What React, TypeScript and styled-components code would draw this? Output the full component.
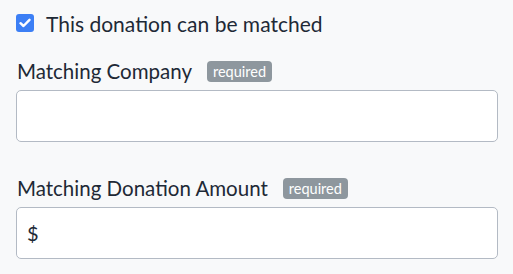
import React from 'react';
import styled, { createGlobalStyle } from 'styled-components';

const Global = createGlobalStyle`
  html, body {
    margin:0;
    padding:0;
    background:#f8f9fa;
  }
  body {
    font-family:Lato, "Open Sans", sans-serif;
    color:#1e2936;
  }
`;

const Form = styled.form`
  padding:14px 15px 16px 16px;
`;

const CheckRow = styled.label`
  display:flex;
  align-items:center;
  gap:12px;
  height:18px;
  font-size:21px;
  cursor:pointer;
`;

const Box = styled.span`
  display:flex;
  align-items:center;
  justify-content:center;
  width:18px;
  height:18px;
  border-radius:3px;
  background:#3c7ff5;
`;

const Field = styled.div<{ $gap: number }>`
  margin-top:${p => p.$gap}px;
`;

const LabelRow = styled.div`
  display:flex;
  align-items:center;
  gap:15px;
  height:22px;
  padding-left:1px;
  margin-bottom:8px;
  font-size:20.5px;
`;

const Badge = styled.span`
  display:inline-flex;
  align-items:center;
  height:21px;
  padding:0 6px;
  border-radius:4px;
  background:#8e979e;
  color:#fff;
  font-size:14.5px;
`;

const InputBox = styled.div`
  display:flex;
  align-items:center;
  height:50px;
  padding:0 10px;
  background:#fff;
  border:1px solid #b3bac4;
  border-radius:5px;
  font-size:20px;
`;

const Input = styled.input`
  flex:1;
  border:0;
  outline:0;
  background:transparent;
  font:inherit;
  color:inherit;
  padding:0;
`;

const App = () => (
  <>
    <Global />
    <Form>
      <CheckRow>
        <Box>
          <svg width="12" height="10" viewBox="0 0 12 10">
            <path d="M1.5 5.2 4.5 8 10.5 1.8" fill="none" stroke="#fff" strokeWidth="2.4" strokeLinecap="round" strokeLinejoin="round" />
          </svg>
        </Box>
        This donation can be matched
      </CheckRow>
      <Field $gap={28}>
        <LabelRow>Matching Company <Badge>required</Badge></LabelRow>
        <InputBox><Input /></InputBox>
      </Field>
      <Field $gap={35}>
        <LabelRow>Matching Donation Amount <Badge>required</Badge></LabelRow>
        <InputBox>$<Input /></InputBox>
      </Field>
    </Form>
  </>
);

export default App;
